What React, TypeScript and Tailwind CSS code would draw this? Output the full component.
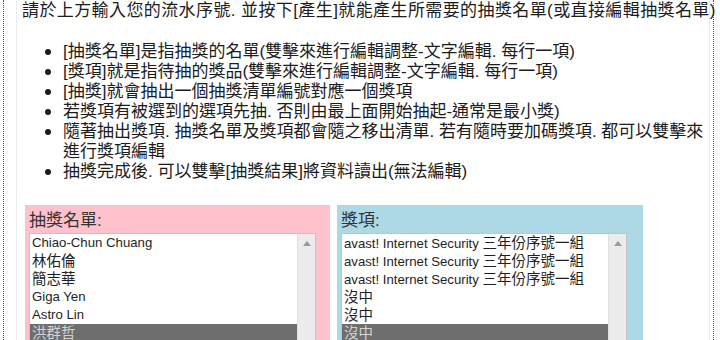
import React from "react";

const FONT = { fontFamily: '"Liberation Sans", "Noto Sans CJK TC", sans-serif' };

const bullets: React.ReactNode[] = [
  "[抽獎名單]是指抽獎的名單(雙擊來進行編輯調整-文字編輯. 每行一項)",
  "[獎項]就是指待抽的獎品(雙擊來進行編輯調整-文字編輯. 每行一項)",
  "[抽獎]就會抽出一個抽獎清單編號對應一個獎項",
  "若獎項有被選到的選項先抽. 否則由最上面開始抽起-通常是最小獎)",
  <>
    隨著抽出獎項. 抽獎名單及獎項都會隨之移出清單. 若有隨時要加碼獎項. 都可以雙擊來
    <br />
    進行獎項編輯
  </>,
  "抽獎完成後. 可以雙擊[抽獎結果]將資料讀出(無法編輯)",
];

function ListBox({ items, selected }: { items: React.ReactNode[]; selected: number }) {
  return (
    <div className="flex h-[140px] w-full border border-[#c4c4c4] bg-white">
      <div className="flex-1 overflow-hidden">
        {items.map((it, i) => (
          <div
            key={i}
            className={
              "h-[18px] whitespace-nowrap pl-[2px] text-[13.2px] leading-[18px] " +
              (i === selected ? "bg-[#6e6e6e] text-[#d4d4d4]" : "text-[#1e1e1e]")
            }
          >
            {it}
          </div>
        ))}
      </div>
      <div className="flex w-[18px] justify-center border-l border-[#e0e0e0] bg-[#ececec] pt-[7px]">
        <svg width="8" height="5" viewBox="0 0 8 5">
          <polygon points="4,0 8,5 0,5" fill="#9a9a9a" />
        </svg>
      </div>
    </div>
  );
}

const cjk = (s: string) => <span className="text-[14.5px]">{s}</span>;

export default function App() {
  const names = ["Chiao-Chun Chuang", cjk("林佑倫"), cjk("簡志華"), "Giga Yen", "Astro Lin", cjk("洪群哲"), cjk("王大明")];
  const prizeLine = (
    <>
      avast! Internet Security {cjk("三年份序號一組")}
    </>
  );
  const prizes = [prizeLine, prizeLine, prizeLine, cjk("沒中"), cjk("沒中"), cjk("沒中"), cjk("沒中")];

  return (
    <div className="flex h-[340px] w-[720px] overflow-hidden bg-white" style={FONT}>
      <div className="ml-[3px] h-[400px] w-[711px] border-x border-dotted border-[#555]">
        <div className="ml-[12px] h-full w-[694px] border-x border-[#ececec] pl-[5px] text-[#1c1c1c]">
          <div className="mt-[1px] whitespace-nowrap text-[17px] leading-[20px] tracking-[0.4px]">
            請於上方輸入您的流水序號. 並按下[產生]就能產生所需要的抽獎名單(或直接編輯抽獎名單)
          </div>
          <div className="mt-[21px] flex flex-col">
            {bullets.map((b, i) => (
              <div key={i} className="flex text-[17px] leading-[20px]">
                <div className="ml-[23px] mt-[7px] h-[6px] w-[6px] shrink-0 rounded-full bg-[#1c1c1c]" />
                <div className="ml-[12px] whitespace-nowrap">{b}</div>
              </div>
            ))}
          </div>
          <div className="ml-[3px] mt-[23px] flex gap-[7px]">
            <div className="h-[200px] w-[305px] bg-[#ffc1cb] pl-[4px] pt-[6px]">
              <div className="text-[17px] leading-[20px] text-[#333]">抽獎名單:</div>
              <div className="mt-[2px] w-[287px]">
                <ListBox items={names} selected={5} />
              </div>
            </div>
            <div className="h-[200px] w-[306px] bg-[#add8e6] pl-[4px] pt-[6px]">
              <div className="text-[17px] leading-[20px] text-[#333]">獎項:</div>
              <div className="mt-[2px] w-[286px]">
                <ListBox items={prizes} selected={5} />
              </div>
            </div>
          </div>
        </div>
      </div>
    </div>
  );
}
